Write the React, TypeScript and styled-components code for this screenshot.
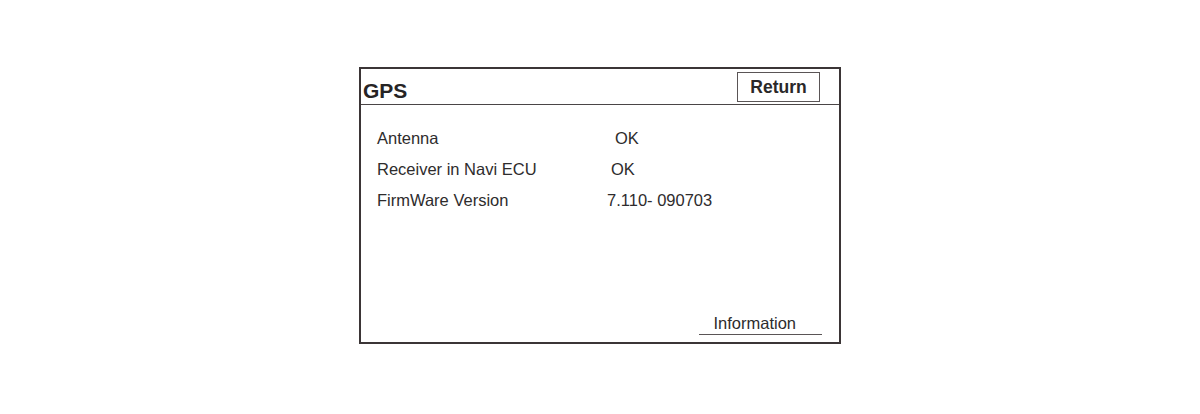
import styled, { createGlobalStyle } from "styled-components";

const GlobalStyle = createGlobalStyle`
  html, body {
    margin: 0;
    padding: 0;
    background: #ffffff;
  }
  body {
    font-family: "Liberation Sans", Arial, sans-serif;
    color: #2c2a2b;
  }
`;

interface Row {
  label: string;
  value: string;
  offset: number;
}

const rows: Row[] = [
  { label: "Antenna", value: "OK", offset: 8 },
  { label: "Receiver in Navi ECU", value: "OK", offset: 4 },
  { label: "FirmWare Version", value: "7.110- 090703", offset: 0 },
];

const App = () => {
  return (
    <Page>
      <GlobalStyle />
      <Screen>
        <Header>
          <Title>GPS</Title>
          <ReturnButton>Return</ReturnButton>
        </Header>
        <Body>
          {rows.map((row) => (
            <InfoRow key={row.label}>
              <Label>{row.label}</Label>
              <Value offset={row.offset}>{row.value}</Value>
            </InfoRow>
          ))}
        </Body>
        <Footer>
          <InfoLink>Information</InfoLink>
        </Footer>
      </Screen>
    </Page>
  );
};

const Page = styled.div`
  width: 1200px;
  height: 414px;
  display: flex;
  justify-content: flex-start;
  align-items: flex-start;
  padding: 67px 0 0 359px;
  box-sizing: border-box;
`;

const Screen = styled.div`
  width: 482px;
  height: 277px;
  box-sizing: border-box;
  border: 2px solid #3b3536;
  display: flex;
  flex-direction: column;
  background: #ffffff;
`;

const Header = styled.div`
  height: 36px;
  box-sizing: border-box;
  border-bottom: 1.5px solid #4a4546;
  display: flex;
  align-items: flex-start;
  justify-content: space-between;
  padding: 3px 19px 0 2px;
`;

const Title = styled.div`
  font-size: 21px;
  font-weight: bold;
  line-height: 24px;
  margin-top: 7px;
  color: #262425;
`;

const ReturnButton = styled.div`
  width: 83px;
  height: 30px;
  box-sizing: border-box;
  border: 1.5px solid #5a5556;
  display: flex;
  align-items: center;
  justify-content: center;
  font-size: 17.5px;
  font-weight: bold;
  color: #2a2829;
  padding-top: 1px;
`;

const Body = styled.div`
  display: flex;
  flex-direction: column;
  padding: 18px 0 0 16px;
`;

const InfoRow = styled.div`
  display: flex;
  height: 31px;
  line-height: 31px;
  font-size: 16.5px;
`;

const Label = styled.div`
  width: 230px;
  color: #2e2c2d;
`;

const Value = styled.div<{ offset: number }>`
  padding-left: ${({ offset }) => offset}px;
  color: #2e2c2d;
`;

const Footer = styled.div`
  margin-top: auto;
  display: flex;
  justify-content: flex-end;
  padding: 0 17px 7px 0;
`;

const InfoLink = styled.div`
  font-size: 16.5px;
  line-height: 20px;
  padding: 0 26px 1px 14px;
  border-bottom: 1.5px solid #5a5556;
  color: #2e2c2d;
`;

export default App;
